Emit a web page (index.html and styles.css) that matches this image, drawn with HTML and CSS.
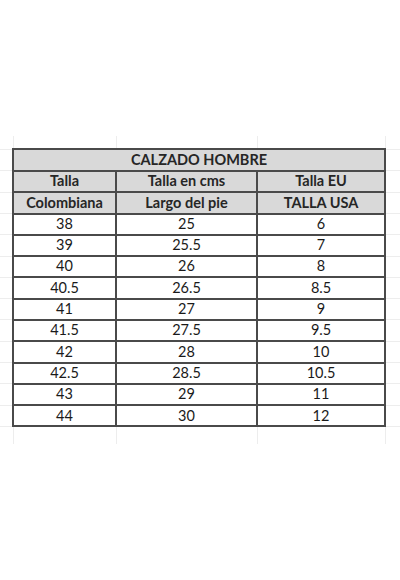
FILE: index.html
```html
<!DOCTYPE html>
<html lang="es">
<head>
<meta charset="utf-8">
<link rel="stylesheet" href="styles.css">
<title>Calzado hombre</title>
</head>
<body>
<div class="sheet">
<table class="grid">
  <colgroup>
    <col class="c-edge-l"><col class="c1"><col class="c2"><col class="c3"><col class="c-edge-r">
  </colgroup>
  <tr class="spacer-top"><td class="e"></td><td class="e"></td><td class="e"></td><td class="e"></td><td class="e"></td></tr>
  <tr class="hd"><td class="e"></td><td class="h" colspan="3">CALZADO HOMBRE</td><td class="e"></td></tr>
  <tr class="hd"><td class="e"></td><td class="h">Talla</td><td class="h">Talla en cms</td><td class="h">Talla EU</td><td class="e"></td></tr>
  <tr class="hd"><td class="e"></td><td class="h">Colombiana</td><td class="h">Largo del pie</td><td class="h">TALLA USA</td><td class="e"></td></tr>
  <tr class="dr"><td class="e"></td><td class="d">38</td><td class="d">25</td><td class="d">6</td><td class="e"></td></tr>
  <tr class="dr"><td class="e"></td><td class="d">39</td><td class="d">25.5</td><td class="d">7</td><td class="e"></td></tr>
  <tr class="dr"><td class="e"></td><td class="d">40</td><td class="d">26</td><td class="d">8</td><td class="e"></td></tr>
  <tr class="dr"><td class="e"></td><td class="d">40.5</td><td class="d">26.5</td><td class="d">8.5</td><td class="e"></td></tr>
  <tr class="dr"><td class="e"></td><td class="d">41</td><td class="d">27</td><td class="d">9</td><td class="e"></td></tr>
  <tr class="dr"><td class="e"></td><td class="d">41.5</td><td class="d">27.5</td><td class="d">9.5</td><td class="e"></td></tr>
  <tr class="dr"><td class="e"></td><td class="d">42</td><td class="d">28</td><td class="d">10</td><td class="e"></td></tr>
  <tr class="dr"><td class="e"></td><td class="d">42.5</td><td class="d">28.5</td><td class="d">10.5</td><td class="e"></td></tr>
  <tr class="dr"><td class="e"></td><td class="d">43</td><td class="d">29</td><td class="d">11</td><td class="e"></td></tr>
  <tr class="dr"><td class="e"></td><td class="d">44</td><td class="d">30</td><td class="d">12</td><td class="e"></td></tr>
  <tr class="spacer-bot"><td class="e"></td><td class="e"></td><td class="e"></td><td class="e"></td><td class="e"></td></tr>
</table>
</div>
</body>
</html>
```
FILE: styles.css
```css
html, body {
  margin: 0;
  padding: 0;
  background: #ffffff;
}
body {
  width: 400px;
  height: 580px;
  overflow: hidden;
  font-family: Lato, "Open Sans", "Liberation Sans", sans-serif;
  color: #1e1e1e;
}
.sheet {
  padding-top: 136px;
}
.grid {
  border-collapse: collapse;
  table-layout: fixed;
  width: 400px;
}
.c-edge-l { width: 13px; }
.c1 { width: 103px; }
.c2 { width: 141px; }
.c3 { width: 128px; }
.c-edge-r { width: 15px; }

.grid td {
  padding: 0;
  text-align: center;
  font-size: 14.5px;
  line-height: 1;
}
.e {
  border: 1px solid #ededed;
}
.spacer-top td.e {
  border-top: none;
}
.spacer-bot td.e {
  border-bottom: none;
}
.grid tr td.e:first-child {
  border-left: none;
}
.grid tr td.e:last-child {
  border-right: none;
}
.spacer-top { height: 13px; }
.spacer-bot { height: 18px; }
.hd { height: 21.5px; }
.dr { height: 21.3px; }

.h {
  background: #d9d9d9;
  border: 2px solid #4a4a4a;
  font-weight: 700;
  color: #262626;
}
.d {
  border: 2px solid #4a4a4a;
  font-weight: 400;
  color: #1a1a1a;
}
```
